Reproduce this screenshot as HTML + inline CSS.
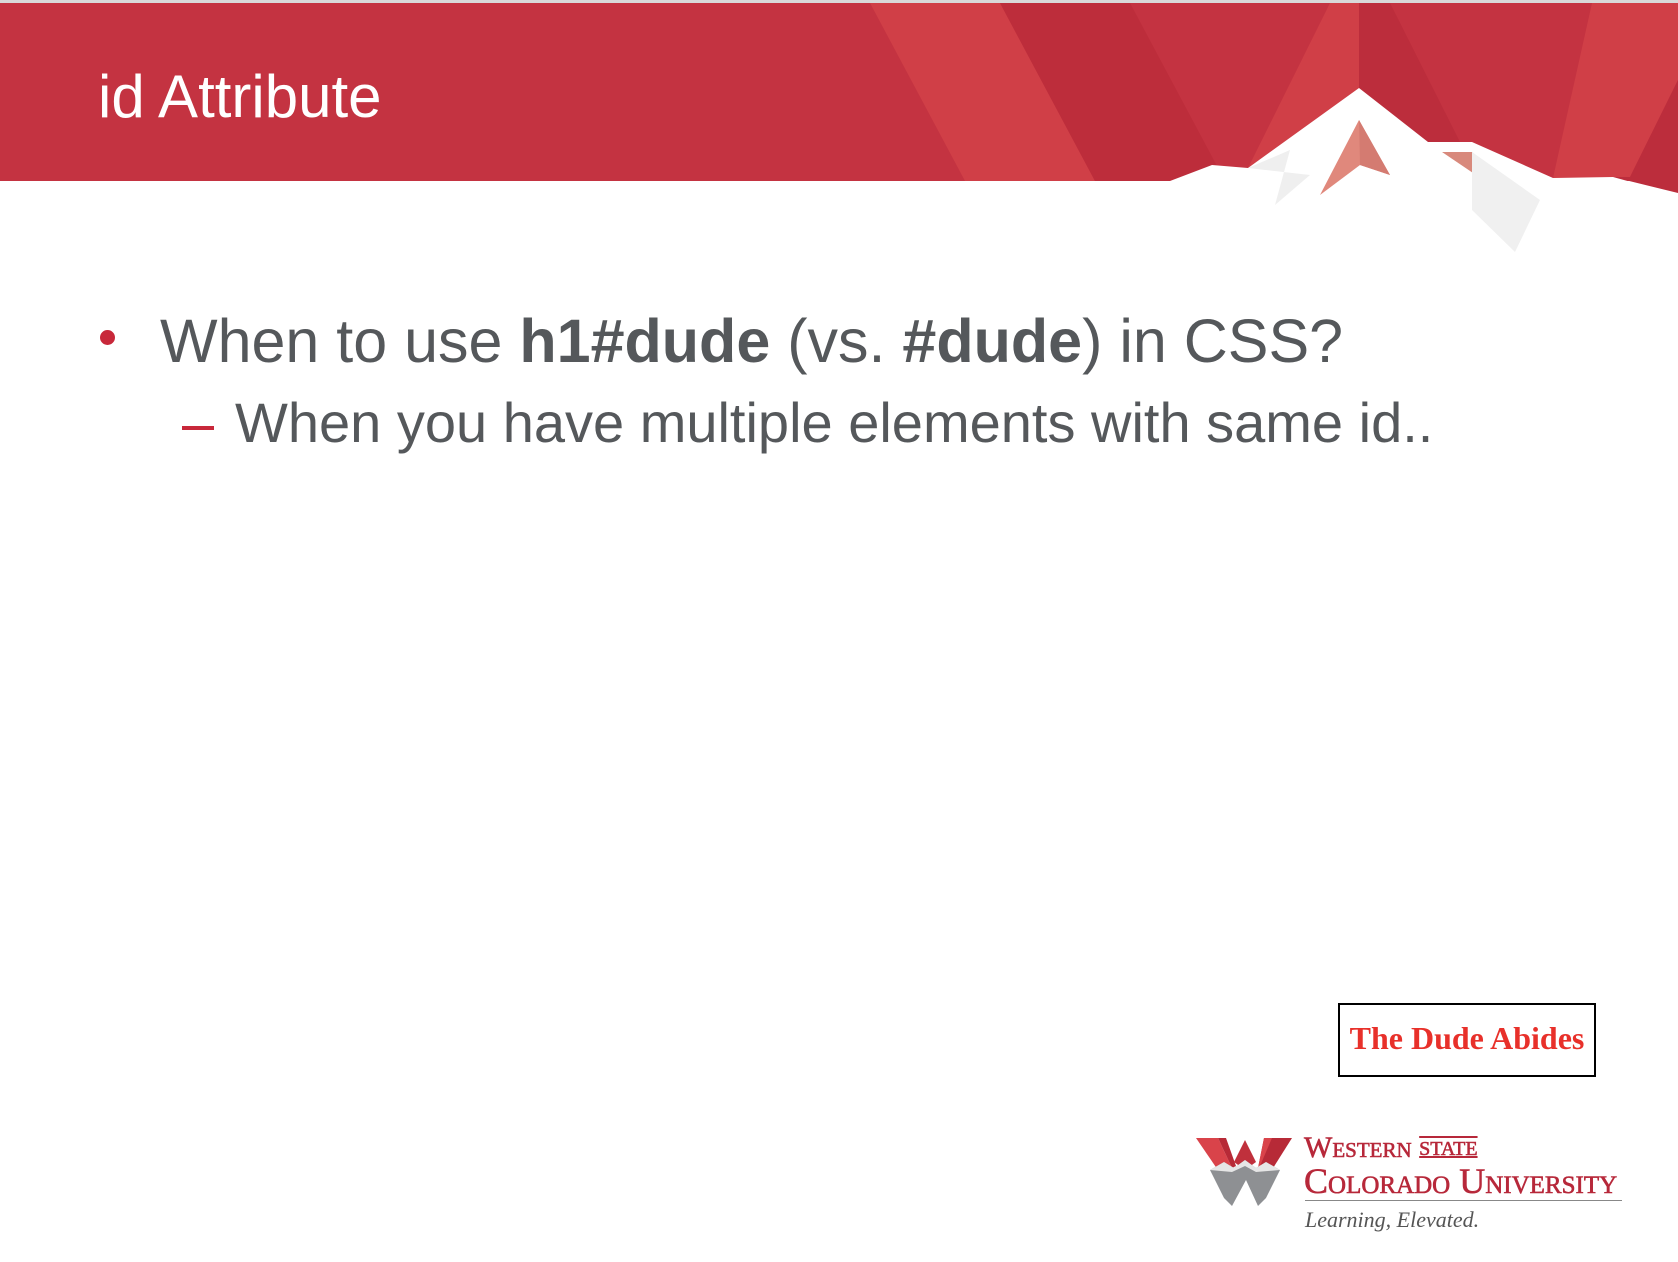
<!DOCTYPE html>
<html><head><meta charset="utf-8"><style>
*{margin:0;padding:0;box-sizing:border-box}
body{width:1678px;height:1262px;background:#fff;position:relative;overflow:hidden;font-family:"Liberation Sans",Arial,sans-serif}
.abs{position:absolute;white-space:nowrap}
</style></head><body>
<svg class="abs" style="left:0;top:0" width="1678" height="260" viewBox="0 0 1678 260">
<rect x="0" y="0" width="1678" height="3" fill="#d9d9d9"/>
<rect x="0" y="3" width="1678" height="178" fill="#c43341"/>
<polygon points="870,3 1000,3 1095,181 965,181" fill="#d03f47"/>
<polygon points="1000,3 1130,3 1225,181 1095,181" fill="#bd2d3b"/>
<polygon points="1330,3 1359,3 1359,88 1248,168" fill="#d03f47"/>
<polygon points="1359,3 1390,3 1460,142 1428,142 1359,88" fill="#bc2d3c"/>
<polygon points="1592,3 1678,3 1678,80 1630,177 1553,178" fill="#d03f47"/>
<polygon points="1678,80 1678,193 1613,177 1630,177" fill="#bc2d3c"/>
<polygon points="0,181 1170,181 1212,165 1248,168 1359,88 1428,142 1472,142 1553,178 1613,177 1678,195 1678,260 0,260" fill="#fff"/>
<polygon points="1248,168 1290,150 1275,205 1310,175" fill="#efefef"/>
<polygon points="1359,120 1390,175 1360,165 1320,195" fill="#e0887c"/>
<polygon points="1359,120 1390,175 1360,165" fill="#d47b71"/>
<polygon points="1442,152 1472,152 1525,198 1510,198" fill="#d8897c"/>
<polygon points="1472,142 1472,210 1515,252 1540,200 1472,152" fill="#f0f0f0"/>
</svg>
<div class="abs" style="left:98px;top:62px;font-size:60px;color:#fff;line-height:70px">id Attribute</div>
<div class="abs" style="left:100px;top:330px;width:15px;height:15px;border-radius:50%;background:#c8283a"></div>
<div class="abs" style="left:160px;top:306px;font-size:61px;color:#55585b;line-height:70px">When to use <b>h1#dude</b> (vs. <b>#dude</b>) in CSS?</div>
<div class="abs" style="left:182px;top:426px;width:32px;height:4px;background:#c8283a"></div>
<div class="abs" style="left:235px;top:390px;font-size:56px;color:#55585b;line-height:66px">When you have multiple elements with same id..</div>
<div class="abs" style="left:1338px;top:1003px;width:258px;height:74px;border:2px solid #000;"></div>
<div class="abs" style="left:1338px;top:1003px;width:258px;line-height:70px;text-align:center;font-family:'Liberation Serif',serif;font-weight:bold;font-size:32px;color:#e8302a">The Dude Abides</div>
<svg class="abs" style="left:1196px;top:1136px" width="98" height="72" viewBox="0 0 98 72">
<polygon points="0,2 22,2 36,32 26,40" fill="#d9434a"/>
<polygon points="22,2 30,2 40,30 36,32" fill="#b72a37"/>
<polygon points="38,26 49,4 60,26 49,34" fill="#c0303c"/>
<polygon points="68,2 96,2 72,40 62,32" fill="#b72a37"/>
<polygon points="68,2 76,2 64,30 62,32" fill="#d9434a"/>
<polygon points="14,34 28,26 38,32 49,24 60,32 70,26 84,34 70,62 62,70 50,44 36,70 28,62" fill="#8e9093"/>
<polygon points="14,34 28,26 38,32 49,24 60,32 70,26 84,34 60,36 49,30 36,36" fill="#e6e6e6"/>
</svg>
<div class="abs" style="left:1304px;top:1133px;font-family:'Liberation Serif',serif;font-size:30px;color:#b7283a;line-height:30px;font-variant:small-caps;-webkit-text-stroke:0.6px #b7283a">Western <span style="font-size:20px;text-decoration:underline overline;vertical-align:2px">STATE</span></div>
<div class="abs" style="left:1304px;top:1163px;font-family:'Liberation Serif',serif;font-size:36px;color:#b7283a;line-height:36px;font-variant:small-caps;-webkit-text-stroke:0.6px #b7283a">Colorado University</div>
<div class="abs" style="left:1305px;top:1200px;width:317px;height:1px;background:#888"></div>
<div class="abs" style="left:1305px;top:1207px;font-family:'Liberation Serif',serif;font-style:italic;font-size:22px;color:#555;line-height:26px">Learning, Elevated.</div>
</body></html>
